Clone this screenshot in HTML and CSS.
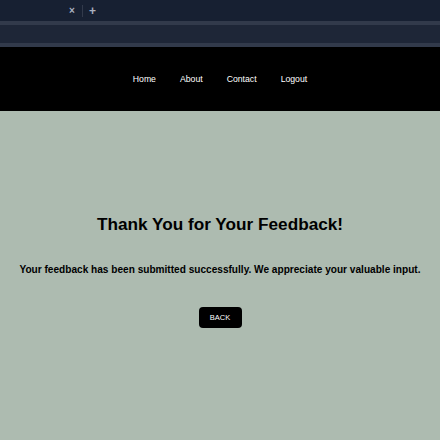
FILE: index.html
```html
<!DOCTYPE html>
<html>
<head>
<meta charset="utf-8">
<link rel="stylesheet" href="styles.css">
</head>
<body>
<div class="chrome">
  <div class="tabbar">
    <span class="tab-close">×</span>
    <span class="tab-divider"></span>
    <span class="tab-new">+</span>
  </div>
  <div class="rule"></div>
  <div class="toolbar"></div>
  <div class="rule"></div>
</div>
<nav class="nav">
  <a href="#">Home</a>
  <a href="#">About</a>
  <a href="#">Contact</a>
  <a href="#">Logout</a>
</nav>
<main class="main">
  <h1 class="title">Thank You for Your Feedback!</h1>
  <p class="message">Your feedback has been submitted successfully. We appreciate your valuable input.</p>
  <button class="back">BACK</button>
</main>
</body>
</html>
```
FILE: styles.css
```css
html, body {
  margin: 0;
  padding: 0;
  height: 100%;
}
body {
  font-family: "Liberation Sans", Arial, sans-serif;
  background: #adbbb0;
  display: flex;
  flex-direction: column;
}
.chrome {
  background: #1e2637;
}
.tabbar {
  height: 21px;
  background: #172032;
  display: flex;
  align-items: center;
  padding-left: 68px;
  color: #aab1c0;
}
.tab-close {
  font-size: 10px;
  font-weight: bold;
  width: 8px;
  text-align: center;
}
.tab-divider {
  width: 1px;
  height: 12px;
  background: #323a4b;
  margin: 0 6px 0 6px;
}
.tab-new {
  font-size: 12px;
  font-weight: bold;
}
.rule {
  height: 4px;
  background: #323a4b;
}
.toolbar {
  height: 18px;
  background: #1e2637;
}
.nav {
  height: 64px;
  background: #000;
  display: flex;
  justify-content: center;
  align-items: center;
  gap: 24px;
  box-sizing: border-box;
}
.nav a {
  color: #fff;
  text-decoration: none;
  font-size: 8.7px;
}
.main {
  flex: 1;
  display: flex;
  flex-direction: column;
  align-items: center;
  padding-top: 103px;
}
.title {
  margin: 0;
  font-size: 17.2px;
  line-height: 20px;
  font-weight: bold;
  color: #000;
}
.message {
  margin: 30px 0 0;
  font-size: 10.1px;
  line-height: 12px;
  font-weight: bold;
  color: #000;
}
.back {
  margin-top: 31px;
  width: 43px;
  height: 21px;
  background: #000;
  color: #fff;
  border: none;
  border-radius: 4px;
  font-family: "Liberation Sans", Arial, sans-serif;
  font-size: 7.5px;
  padding: 0;
}
```
